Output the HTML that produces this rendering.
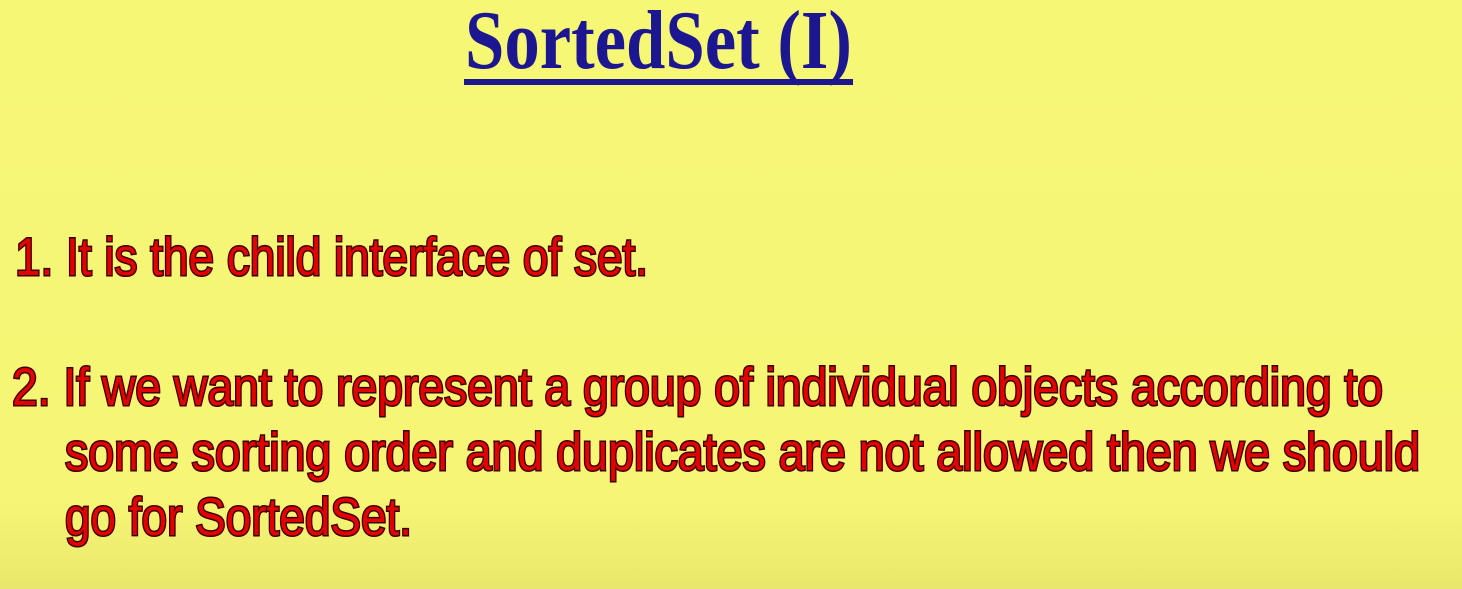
<!DOCTYPE html>
<html><head><style>
html,body{margin:0;padding:0;}
body{width:1462px;height:589px;overflow:hidden;background:linear-gradient(#f7f776 0%,#f6f575 85%,#e9e86c 100%);}
svg{display:block}
.t{font-family:"Liberation Sans",Arial,sans-serif;font-size:53px;fill:#e30000;stroke:#3a0000;stroke-width:3px;paint-order:stroke;}
</style></head><body>
<svg width="1462" height="589" xmlns="http://www.w3.org/2000/svg">
<text x="465" y="68" font-family="Liberation Serif,serif" font-weight="bold" font-size="84" fill="#1c1690" textLength="387" lengthAdjust="spacingAndGlyphs">SortedSet (I)</text>
<rect x="464" y="79" width="389" height="6" fill="#1c1690"/>
<text class="t" x="15" y="275" textLength="633" lengthAdjust="spacingAndGlyphs">1. It is the child interface of set.</text>
<text class="t" x="12" y="405" textLength="1371" lengthAdjust="spacingAndGlyphs">2. If we want to represent a group of individual objects according to</text>
<text class="t" x="65" y="470" textLength="1355" lengthAdjust="spacingAndGlyphs">some sorting order and duplicates are not allowed  then we should</text>
<text class="t" x="65" y="535" textLength="347" lengthAdjust="spacingAndGlyphs">go for SortedSet.</text>
</svg>
</body></html>
